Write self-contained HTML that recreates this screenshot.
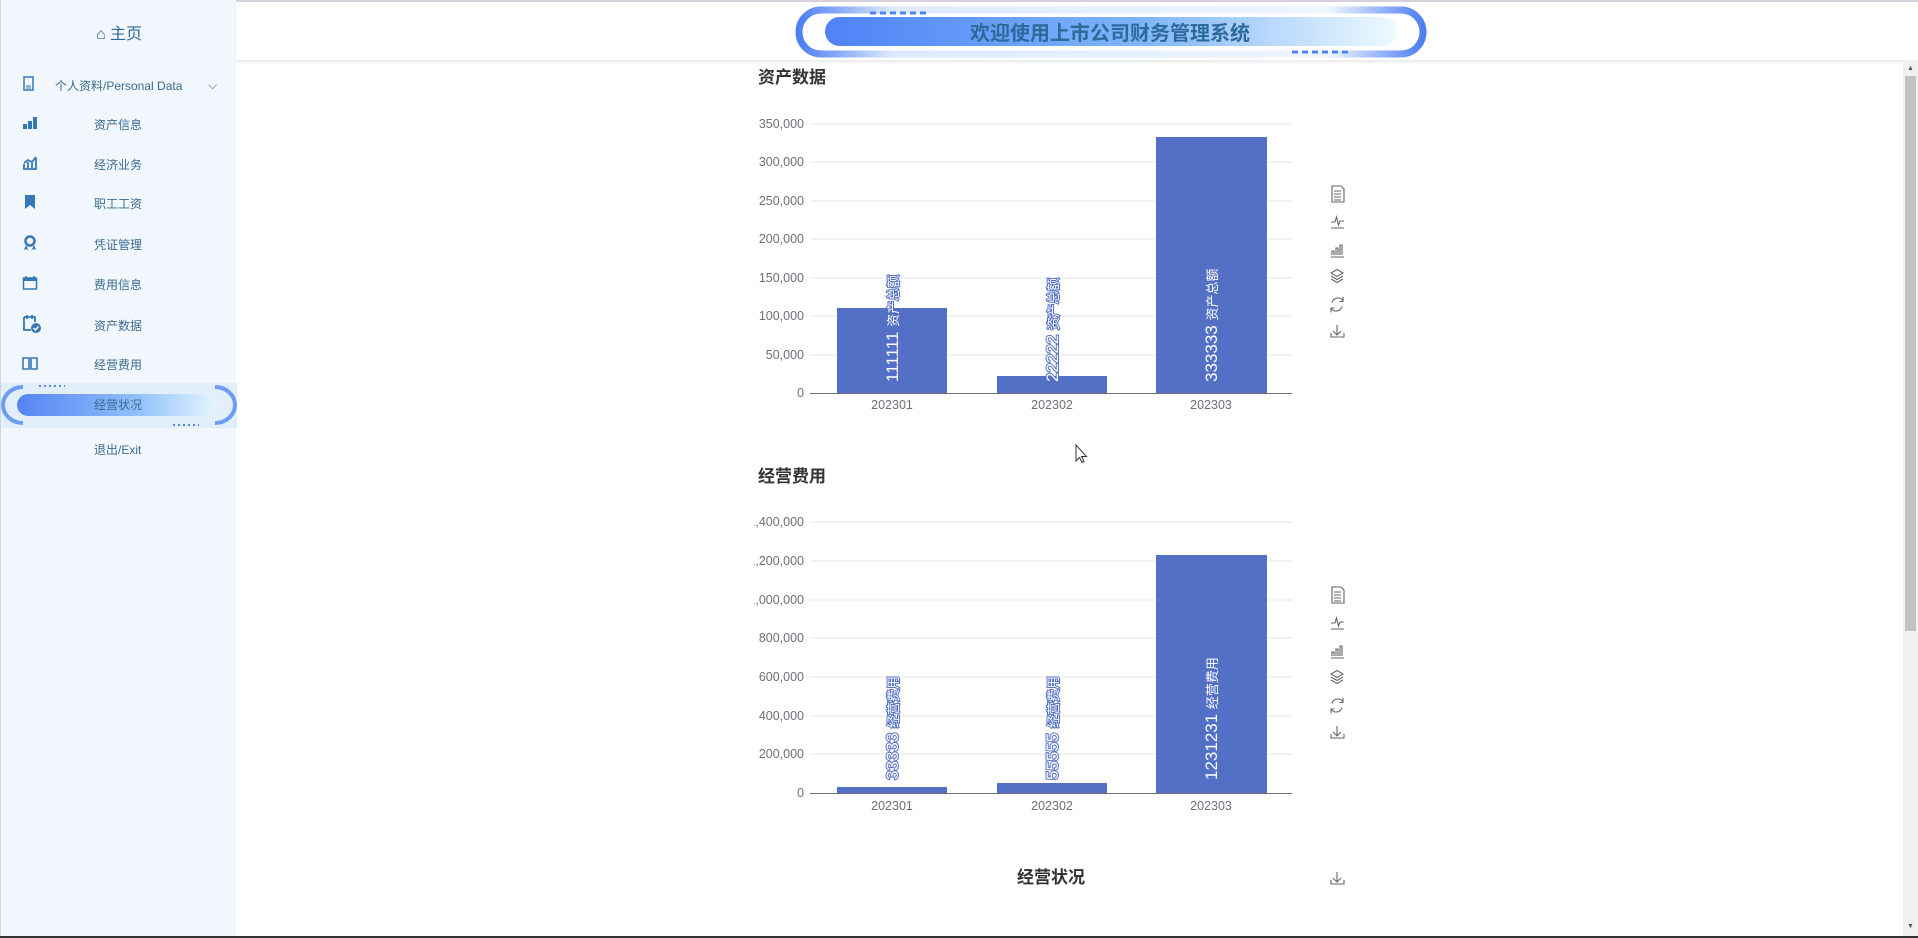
<!DOCTYPE html>
<html><head><meta charset="utf-8"><style>
*{margin:0;padding:0;box-sizing:border-box}
body{width:1918px;height:938px;overflow:hidden;background:#fff;font-family:"Liberation Sans","Noto Sans CJK SC",sans-serif;position:relative}
#side{position:absolute;left:0;top:0;width:236px;height:938px;background:#f1f7fd;border-left:1px solid #c9d6e6}
#top{position:absolute;left:236px;top:0;right:0;height:60px;background:#fff;border-top:2px solid #d8cfdc;box-shadow:0 2px 3px #e8e8e8}
.home{position:absolute;top:20px;left:0;width:236px;text-align:center;font-size:16px;color:#2f6a94}
.mi{position:absolute;left:0;width:236px;height:30px;font-size:12px;color:#3b6b8f}
.mi span{position:absolute;left:93px;top:5px}
.mi svg{position:absolute;left:21px;top:4px}
#scroll{position:absolute;right:0;top:60px;width:15px;height:878px;background:#f1f1f1}
</style></head><body>
<div id="side">
<div class="home">⌂ 主页</div>
<div class="mi" style="top:72px"><svg width="14" height="16"><rect x="2" y="1" width="9" height="13" fill="none" stroke="#3478b8" stroke-width="1.5"/><path d="M4 10h5M4 12h5" stroke="#3478b8"/></svg><span style="left:54px">个人资料/Personal Data</span><span style="left:207px;top:6px;font-size:12px">⌵</span></div>
<div class="mi" style="top:111px"><svg width="16" height="16"><rect x="1" y="9" width="4" height="5" fill="#3478b8"/><rect x="6" y="6" width="4" height="8" fill="#3478b8"/><rect x="11" y="2" width="4" height="12" fill="#3478b8"/></svg><span>资产信息</span></div>
<div class="mi" style="top:151px"><svg width="16" height="16"><path d="M1 14h14M2 13V9M6 13V7M10 13V8M14 13V3M2 8l4-3 4 2 4-5" stroke="#3478b8" stroke-width="1.8" fill="none"/></svg><span>经济业务</span></div>
<div class="mi" style="top:190px"><svg width="16" height="16"><path d="M3 1h10v14l-5-4-5 4z" fill="#3478b8"/></svg><span>职工工资</span></div>
<div class="mi" style="top:231px"><svg width="16" height="16"><circle cx="8" cy="6" r="4.5" fill="none" stroke="#3478b8" stroke-width="2.5"/><path d="M4 10l-2 5 3-1 2 2M12 10l2 5-3-1-2 2" fill="#3478b8"/></svg><span>凭证管理</span></div>
<div class="mi" style="top:271px"><svg width="16" height="16"><rect x="1.5" y="3" width="13" height="11" fill="none" stroke="#3478b8" stroke-width="1.5"/><rect x="1.5" y="3" width="13" height="3" fill="#3478b8"/><path d="M4 1v4M12 1v4" stroke="#3478b8" stroke-width="1.5"/></svg><span>费用信息</span></div>
<div class="mi" style="top:312px"><svg width="20" height="20" style="top:1px"><path d="M2 4h11v5M2 4v13h7M5 2v4M10 2v4" stroke="#3478b8" stroke-width="1.8" fill="none"/><circle cx="14" cy="15" r="5" fill="#3478b8"/><path d="M11.5 15l2 2 3-3.5" stroke="#fff" stroke-width="1.4" fill="none"/></svg><span>资产数据</span></div>
<div class="mi" style="top:351px"><svg width="16" height="16"><path d="M1 3h6v11H1zM9 3h6v11H9z" fill="none" stroke="#3478b8" stroke-width="1.6"/></svg><span>经营费用</span></div>
<div style="position:absolute;left:0;top:383px;width:236px;height:45px;background:#e3eefb"></div>
<svg style="position:absolute;left:0;top:383px" width="236" height="45">
<defs><linearGradient id="ag" x1="0" x2="1"><stop offset="0" stop-color="#5584f2"/><stop offset="0.6" stop-color="#8fc0fb"/><stop offset="1" stop-color="#e6f5ff"/></linearGradient></defs>
<path d="M22 4 A20 18 0 0 0 22 40" stroke="#6d9cf5" stroke-width="4" fill="none"/>
<path d="M214 4 A20 18 0 0 1 214 40" stroke="#6d9cf5" stroke-width="4" fill="none"/>
<rect x="16" y="11" width="200" height="22" rx="11" fill="url(#ag)"/>
<path d="M38 3h26M172 42h26" stroke="#5a8ae8" stroke-width="2" stroke-dasharray="2 3"/>
</svg>
<div class="mi" style="top:391px"><span>经营状况</span></div>
<div class="mi" style="top:436px"><span>退出/Exit</span></div>
</div>
<div id="top">
<svg style="position:absolute;left:559px;top:4px" width="632" height="52">
<defs><linearGradient id="tg" x1="0" x2="1"><stop offset="0" stop-color="#4f82f6"/><stop offset="0.55" stop-color="#7fb4fa"/><stop offset="1" stop-color="#eefaff"/></linearGradient>
<linearGradient id="og" x1="0" x2="1"><stop offset="0" stop-color="#4d7ff2"/><stop offset="0.15" stop-color="#dde9fc"/><stop offset="0.85" stop-color="#eef6ff"/><stop offset="1" stop-color="#4d7ff2"/></linearGradient></defs>
<rect x="4" y="4" width="624" height="44" rx="22" fill="none" stroke="url(#og)" stroke-width="7"/>
<rect x="30" y="11" width="572" height="29" rx="14.5" fill="url(#tg)"/>
<path d="M75 7h60M497 46h60" stroke="#4f82f6" stroke-width="3" stroke-dasharray="6 4"/>
<text x="315" y="34" text-anchor="middle" font-size="20" font-weight="bold" fill="#2c6a9a" font-family="Liberation Sans,Noto Sans CJK SC,sans-serif">欢迎使用上市公司财务管理系统</text>
</svg>
</div>
<div id="scroll"><div style="position:absolute;left:2px;top:16px;width:11px;height:555px;background:#c1c1c1"></div>
<div style="position:absolute;left:4px;top:5px;font-size:7px;color:#555">▲</div><div style="position:absolute;left:4px;bottom:8px;font-size:7px;color:#555">▼</div></div>
<svg style="position:absolute;left:0;top:0" width="1900" height="938" font-family="Liberation Sans,Noto Sans CJK SC,sans-serif">
<g font-size="17" font-weight="bold" fill="#333"><text x="758" y="83">资产数据</text><text x="758" y="482">经营费用</text><text x="1051" y="883" text-anchor="middle">经营状况</text></g>
<g stroke="#e6e6e6">
<path d="M810 124H1292M810 162H1292M810 201H1292M810 239H1292M810 278H1292M810 316H1292M810 355H1292"/>
<path d="M810 522H1292M810 561H1292M810 600H1292M810 638H1292M810 677H1292M810 716H1292M810 754H1292"/>
</g>
<path d="M810 393.5H1292M810 793.5H1292" stroke="#6e7079"/>
<g font-size="12.5" fill="#6e7079" text-anchor="end">
<text x="804" y="128">350,000</text><text x="804" y="166">300,000</text><text x="804" y="205">250,000</text><text x="804" y="243">200,000</text><text x="804" y="282">150,000</text><text x="804" y="320">100,000</text><text x="804" y="359">50,000</text><text x="804" y="397">0</text>
<text x="804" y="526">1,400,000</text><text x="804" y="565">1,200,000</text><text x="804" y="604">1,000,000</text><text x="804" y="642">800,000</text><text x="804" y="681">600,000</text><text x="804" y="720">400,000</text><text x="804" y="758">200,000</text><text x="804" y="797">0</text>
</g>
<rect x="730" y="510" width="24" height="260" fill="#fff"/>
<g font-size="12.5" fill="#6e7079" text-anchor="middle">
<text x="892" y="409">202301</text><text x="1052" y="409">202302</text><text x="1211" y="409">202303</text>
<text x="892" y="810">202301</text><text x="1052" y="810">202302</text><text x="1211" y="810">202303</text>
</g>
<g fill="#5470c6">
<rect x="837" y="308" width="110" height="85"/><rect x="997" y="376" width="110" height="17"/><rect x="1156" y="137" width="111" height="256"/>
<rect x="837" y="787" width="110" height="6"/><rect x="997" y="783" width="110" height="10"/><rect x="1156" y="555" width="111" height="238"/>
</g>
<g font-size="17" fill="#fff" stroke="#5470c6" stroke-width="2" paint-order="stroke">
<text transform="translate(898,382) rotate(-90)">111111 <tspan font-size="13">资产总额</tspan></text>
<text transform="translate(1058,382) rotate(-90)">22222 <tspan font-size="13">资产总额</tspan></text>
<text transform="translate(1217,382) rotate(-90)">333333 <tspan font-size="13">资产总额</tspan></text>
<text transform="translate(898,780) rotate(-90)">33333 <tspan font-size="13">经营费用</tspan></text>
<text transform="translate(1058,780) rotate(-90)">55555 <tspan font-size="13">经营费用</tspan></text>
<text transform="translate(1217,780) rotate(-90)">1231231 <tspan font-size="13">经营费用</tspan></text>
</g>
<g id="tb" fill="none" stroke="#666" stroke-width="1.1">
<path d="M1332 186h9l3 3v13h-12zM1334 191h7M1334 194h7M1334 197h7M1334 200h7"/>
<path d="M1331 222h4l1.5-5 2 8 1.5-4h4M1331 228h13"/>
<path d="M1332 255v-4h2v4M1336 255v-7h2v7M1340 255v-10h2v10M1331 257h13"/>
<path d="M1331 273l6-3.5 6 3.5-6 3.5zM1331 276l6 3.5 6-3.5M1331 279l6 3.5 6-3.5"/>
<path d="M1343 301a6 6 0 0 0-11 1.5M1331 308a6 6 0 0 0 11-1.5M1343 297v4.5h-3.5M1331 312.5v-4.5h3.5"/>
<path d="M1337 325v10M1333 331l4 4 4-4M1331 333v4h13v-4"/>
</g>
<use href="#tb" y="401"/>
<g fill="none" stroke="#666" stroke-width="1.1"><path d="M1337 872v10M1333 878l4 4 4-4M1331 880v4h13v-4"/></g>
<path d="M1076 445v16l3.5-3.5 2.5 5 2-1-2.5-5h5z" fill="#fff" stroke="#333"/>
</svg>
<div style="position:absolute;left:0;bottom:0;width:1918px;height:2px;background:#333"></div>
</body></html>
